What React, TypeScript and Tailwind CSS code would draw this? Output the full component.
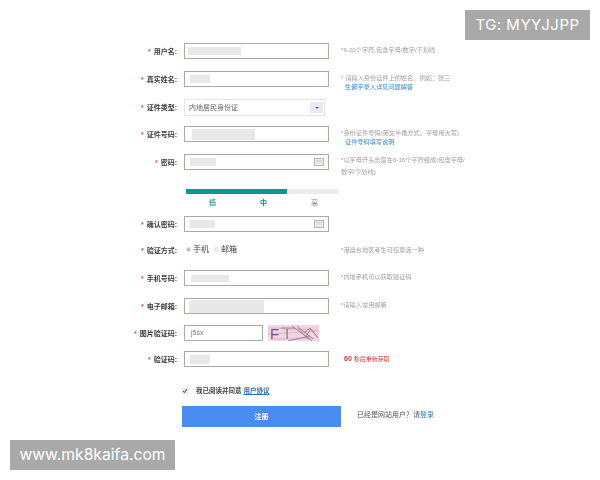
const cjk = "font-['Liberation_Sans','Noto_Sans_CJK_SC',sans-serif]";

function Label({ text }: { text: string }) {
  return (
    <div className="w-[177px] shrink-0 flex justify-end items-center h-full pt-[2px] text-[7px] font-bold text-[#3c3c3c]">
      <span className="text-[#d9534f] mr-[3px]">*</span>
      {text}:
    </div>
  );
}

function Field({ block, icon, className }: { block: string; icon?: boolean; className?: string }) {
  return (
    <div className={`ml-[7px] w-[145px] h-full shrink-0 flex items-center justify-between border border-[#a3b0a0] bg-white ${className ?? ""}`}>
      <div className={`bg-[#e8e8e8] blur-[0.6px] ${block}`} />
      {icon && <KeyIcon />}
    </div>
  );
}

function KeyIcon() {
  return (
    <svg width="10" height="8" viewBox="0 0 10 8" className="mr-[4px]">
      <rect x="0.5" y="0.5" width="9" height="7" fill="#ececec" stroke="#b4b4b4" />
      <path d="M2 2.5h6M2 4h6" stroke="#d0d0d0" strokeWidth="0.8" />
    </svg>
  );
}

function Hint({ children, className }: { children: React.ReactNode; className?: string }) {
  return <div className={`ml-[12px] text-[6.2px] text-[#a0a0a0] ${className ?? "mt-[2px] leading-[9px]"}`}>{children}</div>;
}

function Captcha() {
  return (
    <svg width="51" height="16" viewBox="0 0 51 16" className="ml-[5px]">
      <rect width="51" height="16" fill="#f0d6e2" />
      <path d="M0 3l51 2M0 9l51-3M3 14l44-1" stroke="#e6bdd2" strokeWidth="1.5" />
      <text x="2" y="14" fontSize="15" fill="#76558a" fontFamily="Liberation Sans">F</text>
      <text x="17" y="14" fontSize="15" fill="#5f9a86" fontFamily="Liberation Sans">I</text>
      <path d="M24 1l20 15M29 1l16 13M36 8l6-5 8 10M13 3h14M20 16l22-5" stroke="#8d6a9a" strokeWidth="0.8" fill="none" />
      <path d="M37 12l6-8 6 8M30 3l10 11" stroke="#c9785f" strokeWidth="0.9" fill="none" />
    </svg>
  );
}

export default function App() {
  return (
    <div className={`relative w-[600px] h-[480px] overflow-hidden bg-white ${cjk}`}>
      <form className="pt-[43px] blur-[0.4px]">
        <div className="flex h-[16px]">
          <Label text="用户名" />
          <Field block="ml-[3px] w-[53px] h-[8px]" />
          <Hint>*6-20个字符,包含字母/数字/下划线</Hint>
        </div>

        <div className="flex h-[16px] mt-[12px]">
          <Label text="真实姓名" />
          <Field block="ml-[5px] w-[20px] h-[8px]" />
          <Hint>
            <div>* 请输入身份证件上的姓名，例如：张三</div>
            <div className="ml-[4px] text-[#3f87c8]">生僻字录入详见问题解答</div>
          </Hint>
        </div>

        <div className="flex h-[17px] mt-[12px]">
          <Label text="证件类型" />
          <div className="ml-[7px] w-[141px] h-full flex items-center justify-between border border-[#e6e6e6] pl-[4px] pr-[1px] text-[7px] text-[#666]">
            <span className="pt-[1px]">内地居民身份证</span>
            <div className="w-[13px] h-[11px] bg-[#e8ebf3] flex items-center justify-center">
              <div className="border-x-[2px] border-t-[2px] border-x-transparent border-t-[#666]" />
            </div>
          </div>
        </div>

        <div className="flex h-[16px] mt-[10px]">
          <Label text="证件号码" />
          <Field block="ml-[7px] w-[63px] h-[11px]" />
          <Hint>
            <div>*身份证件号码(英文半角方式、字母用大写)</div>
            <div className="ml-[4px] text-[#3f87c8]">证件号码填写说明</div>
          </Hint>
        </div>

        <div className="flex h-[16px] mt-[12px]">
          <Label text="密码" />
          <Field block="ml-[5px] w-[26px] h-[8px]" icon />
          <Hint className="w-[126px] leading-[12px]">*以字母开头长度在6-16个字符组成(包含字母/数字/下划线)</Hint>
        </div>

        <div className="ml-[186px] mt-[19px] w-[153px] h-[5px] bg-[#ececec]">
          <div className="w-[101px] h-full bg-[#0f9690]" />
        </div>
        <div className="ml-[187px] w-[153px] h-[9px] mt-[4px] grid grid-cols-3 text-center text-[7px] leading-[9px] font-bold text-[#3f9c9a]">
          <span>低</span>
          <span className="text-[#0f8a86]">中</span>
          <span className="font-normal text-[#8c8c8c]">高</span>
        </div>

        <div className="flex h-[16px] mt-[9px]">
          <Label text="确认密码" />
          <Field block="ml-[5px] w-[25px] h-[8px]" icon />
        </div>

        <div className="flex h-[14px] mt-[11px] items-center">
          <Label text="验证方式" />
          <div className="ml-[9px] flex items-center text-[8px] text-[#444] -mt-[1px] w-[143px] shrink-0">
            <span className="w-[5px] h-[5px] rounded-full border border-[#ddd] bg-[#bbb] mr-[2px]" />
            手机
            <span className="w-[5px] h-[5px] rounded-full border border-[#ddd] bg-[#f4f4f4] ml-[5px] mr-[2px]" />
            邮箱
          </div>
          <div className="text-[6.2px] text-[#a0a0a0] ml-[12px]">*港澳台地区考生可任意选一种</div>
        </div>

        <div className="flex h-[16px] mt-[13px]">
          <Label text="手机号码" />
          <Field block="ml-[6px] w-[38px] h-[7px]" className="border-[#93a893]" />
          <Hint>*内地手机可以获取验证码</Hint>
        </div>

        <div className="flex h-[16px] mt-[12px]">
          <Label text="电子邮箱" />
          <Field block="ml-[4px] w-[75px] h-[13px]" />
          <Hint>*请输入常用邮箱</Hint>
        </div>

        <div className="flex h-[16px] mt-[11px]">
          <Label text="图片验证码" />
          <div className="ml-[7px] w-[79px] h-full border border-[#a3b0a0] pl-[6px] flex items-center text-[7px] text-[#777]">j5sx</div>
          <Captcha />
        </div>

        <div className="flex h-[16px] mt-[10px]">
          <Label text="验证码" />
          <Field block="ml-[5px] w-[20px] h-[9px]" />
          <div className="ml-[15px] flex items-center text-[6px] text-[#d0323a]">
            <b className="mr-[2px] text-[7px]">60</b> 秒后重新获取
          </div>
        </div>

        <div className="flex items-center ml-[182px] mt-[19px] h-[10px] text-[6.5px] font-bold text-[#444]">
          <svg width="6" height="6" viewBox="0 0 6 6" className="mr-[8px]">
            <rect width="6" height="6" rx="1" fill="#e4e4e4" />
            <path d="M1 3l1.4 1.5L5 1" stroke="#444" strokeWidth="1" fill="none" />
          </svg>
          我已阅读并同意
          <a className="ml-[2px] text-[#2f6fb0] underline">用户协议</a>
        </div>

        <div className="flex items-center ml-[182px] mt-[10px]">
          <button type="button" className="w-[159px] h-[21px] pt-[1px] bg-[#4a8cf0] text-white text-[7px] font-bold">注册</button>
          <div className="ml-[16px] -mt-[2px] text-[7px] text-[#555]">
            已经是网站用户？请<a className="text-[#2f7fc4]">登录</a>
          </div>
        </div>
      </form>

      <div className="absolute right-[10px] top-[10px] w-[125px] h-[30px] bg-[#a9a9a9] text-white text-[15px] tracking-[0.5px] flex items-center justify-center font-['Inter',sans-serif]">
        TG: MYYJJPP
      </div>
      <div className="absolute left-[10px] top-[440px] w-[165px] h-[30px] bg-[#a9a9a9] text-white text-[15.7px] flex items-center justify-center font-['Inter',sans-serif]">
        www.mk8kaifa.com
      </div>
    </div>
  );
}
